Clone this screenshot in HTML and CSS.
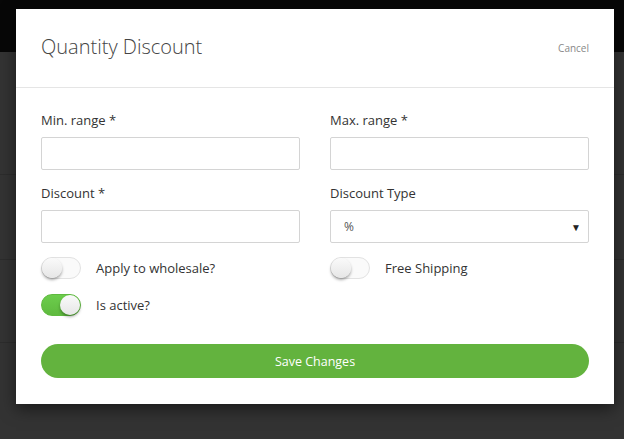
FILE: index.html
```html
<!DOCTYPE html>
<html>
<head>
<meta charset="utf-8">
<link rel="stylesheet" href="styles.css">
</head>
<body>
<div class="page">
  <div class="topbar"></div>
  <div class="backdrop">
    <div class="bgrow r1"></div>
    <div class="bgrow r2"></div>
    <div class="bgrow r3"></div>
  </div>
  <div class="modal">
    <div class="modal-header">
      <h1 class="title">Quantity Discount</h1>
      <span class="cancel">Cancel</span>
    </div>
    <div class="modal-body">
      <div class="grid">
        <div class="field">
          <label class="label">Min. range *</label>
          <div class="input"></div>
        </div>
        <div class="field">
          <label class="label">Max. range *</label>
          <div class="input"></div>
        </div>
        <div class="field">
          <label class="label">Discount *</label>
          <div class="input"></div>
        </div>
        <div class="field">
          <label class="label">Discount Type</label>
          <div class="input select"><span>%</span><span class="arrow">▼</span></div>
        </div>
        <div class="toggle-row">
          <span class="toggle"><span class="knob"></span></span>
          <span class="toggle-label">Apply to wholesale?</span>
        </div>
        <div class="toggle-row">
          <span class="toggle"><span class="knob"></span></span>
          <span class="toggle-label">Free Shipping</span>
        </div>
        <div class="toggle-row second">
          <span class="toggle on"><span class="knob"></span></span>
          <span class="toggle-label">Is active?</span>
        </div>
      </div>
      <button class="save">Save Changes</button>
    </div>
  </div>
</div>
</body>
</html>
```
FILE: styles.css
```css
* { box-sizing: border-box; }
html, body { margin: 0; padding: 0; }
body {
  width: 624px;
  height: 439px;
  overflow: hidden;
  background: #333333;
  font-family: "Open Sans", "Noto Sans", sans-serif;
}
.page {
  position: relative;
  width: 624px;
  height: 439px;
}
.topbar {
  height: 52px;
  background: #070707;
}
.backdrop {
  display: flex;
  flex-direction: column;
}
.bgrow { border-bottom: 1px solid #2c2c2c; }
.r1 { height: 123px; }
.r2 { height: 85px; }
.r3 { height: 83px; }
.modal {
  position: absolute;
  left: 16px;
  top: 9px;
  width: 598px;
  height: 395px;
  background: #ffffff;
  box-shadow: 0 5px 15px rgba(0,0,0,0.5);
}
.modal-header {
  height: 79px;
  border-bottom: 1px solid #e5e5e5;
  display: flex;
  align-items: center;
  justify-content: space-between;
  padding: 0 25px 4px;
}
.title {
  margin: 0;
  font-size: 20px;
  font-weight: 300;
  color: #444;
}
.cancel {
  font-size: 10px;
  color: #888;
  margin-top: 3px;
}
.modal-body {
  padding: 23px 25px 25px;
}
.grid {
  display: grid;
  grid-template-columns: 259px 259px;
  column-gap: 30px;
}
.field {
  display: flex;
  flex-direction: column;
  margin-bottom: 14px;
}
.label {
  font-size: 13px;
  line-height: 18px;
  color: #333;
  margin-bottom: 8px;
}
.input {
  height: 33px;
  border: 1px solid #d4d4d4;
  border-radius: 2px;
  background: #fff;
}
.select {
  display: flex;
  align-items: center;
  justify-content: space-between;
  padding: 0 7px 0 13px;
  font-size: 12px;
  color: #555;
}
.arrow {
  font-size: 10px;
  color: #222;
}
.toggle-row {
  display: flex;
  align-items: center;
  height: 21px;
}
.toggle-row.second { margin-top: 16px; }
.toggle {
  position: relative;
  width: 40px;
  height: 22px;
  border-radius: 11px;
  border: 1px solid #e2e2e2;
  background: #fafafa;
  flex: none;
}
.toggle .knob {
  position: absolute;
  left: 0;
  top: 0;
  width: 20px;
  height: 20px;
  border-radius: 50%;
  background: linear-gradient(#fafafa, #e6e6e6);
  box-shadow: 0 2px 3px rgba(0,0,0,0.35);
}
.toggle.on {
  background: linear-gradient(#6ccd4c, #5fba3f);
  border-color: #5fba3f;
}
.toggle.on .knob {
  left: 18px;
}
.toggle-label {
  margin-left: 15px;
  font-size: 13px;
  color: #333;
}
.save {
  display: block;
  width: 548px;
  height: 34px;
  margin-top: 29px;
  border: none;
  border-radius: 17px;
  background: #63b33e;
  color: #fff;
  font-family: "Open Sans", "Noto Sans", sans-serif;
  font-size: 12.5px;
  padding: 0;
}
```
